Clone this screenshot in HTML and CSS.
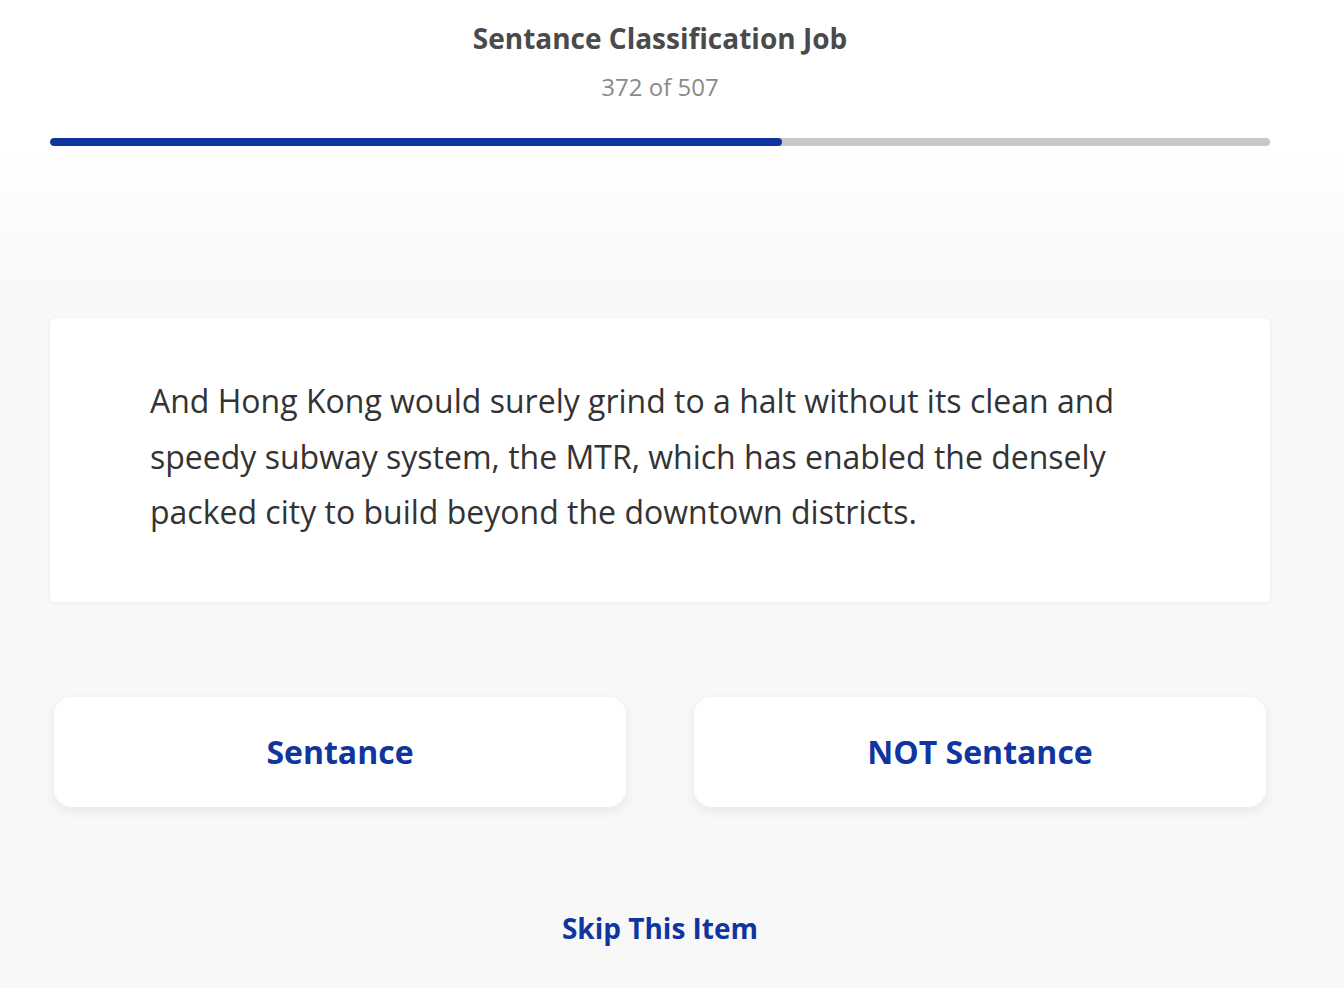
FILE: index.html
```html
<!DOCTYPE html>
<html lang="en">
<head>
    <meta charset="UTF-8">
    <meta name="viewport" content="width=device-width, initial-scale=1.0">
    <title>Sentance Classification Job</title>
    <link rel="stylesheet" href="styles.css">
</head>
<body>
    <div class="page">
        <div class="header">
            <h1 class="title">Sentance Classification Job</h1>
            <p class="count">372 of 507</p>
            <div class="progress">
                <div class="progress-fill" style="width: 60%"></div>
            </div>
        </div>

        <div class="card">
            <p class="sentence">And Hong Kong would surely grind to a halt without its clean and speedy subway system, the MTR, which has enabled the densely packed city to build beyond the downtown districts.</p>
        </div>

        <div class="choices">
            <button class="choice">Sentance</button>
            <button class="choice">NOT Sentance</button>
        </div>

        <a href="#" class="skip">Skip This Item</a>
    </div>
</body>
</html>
```

FILE: styles.css
```css
html, body {
    margin: 0;
    padding: 0;
}
body {
    font-family: "Open Sans", "Noto Sans", sans-serif;
    background: linear-gradient(to bottom, #ffffff 0px, #ffffff 150px, #f8f8f8 300px, #f8f8f8 100%);
    min-height: 988px;
}
.page {
    width: 1220px;
    margin-left: 50px;
    text-align: center;
}
.header {
    padding-top: 20px;
}
.title {
    margin: 0;
    font-size: 28px;
    font-weight: 700;
    line-height: 36px;
    color: #4a4a4a;
}
.count {
    margin: 16px 0 0;
    font-size: 24px;
    line-height: 30px;
    color: #8a8a8a;
}
.progress {
    margin-top: 36px;
    height: 8px;
    border-radius: 4px;
    background: #c8c8c8;
    overflow: hidden;
}
.progress-fill {
    height: 100%;
    background: #0f35a0;
    border-radius: 4px;
}
.card {
    margin-top: 172px;
    background: #fff;
    border-radius: 6px;
    box-shadow: 0 1px 4px rgba(0, 0, 0, 0.06);
    padding: 55px 100px 62px;
    text-align: left;
}
.sentence {
    margin: 0;
    font-size: 32px;
    line-height: 55.5px;
    color: #333;
}
.choices {
    display: flex;
    gap: 68px;
    margin: 95px 4px 0;
}
.choice {
    flex: 1;
    height: 110px;
    border: none;
    border-radius: 18px;
    background: #fff;
    box-shadow: 0 4px 12px rgba(20, 20, 60, 0.08);
    font-family: inherit;
    font-size: 32px;
    font-weight: 700;
    color: #0f35a0;
    cursor: pointer;
}
.skip {
    display: inline-block;
    margin-top: 101px;
    font-size: 28px;
    font-weight: 700;
    line-height: 40px;
    color: #0f35a0;
    text-decoration: none;
}
```
